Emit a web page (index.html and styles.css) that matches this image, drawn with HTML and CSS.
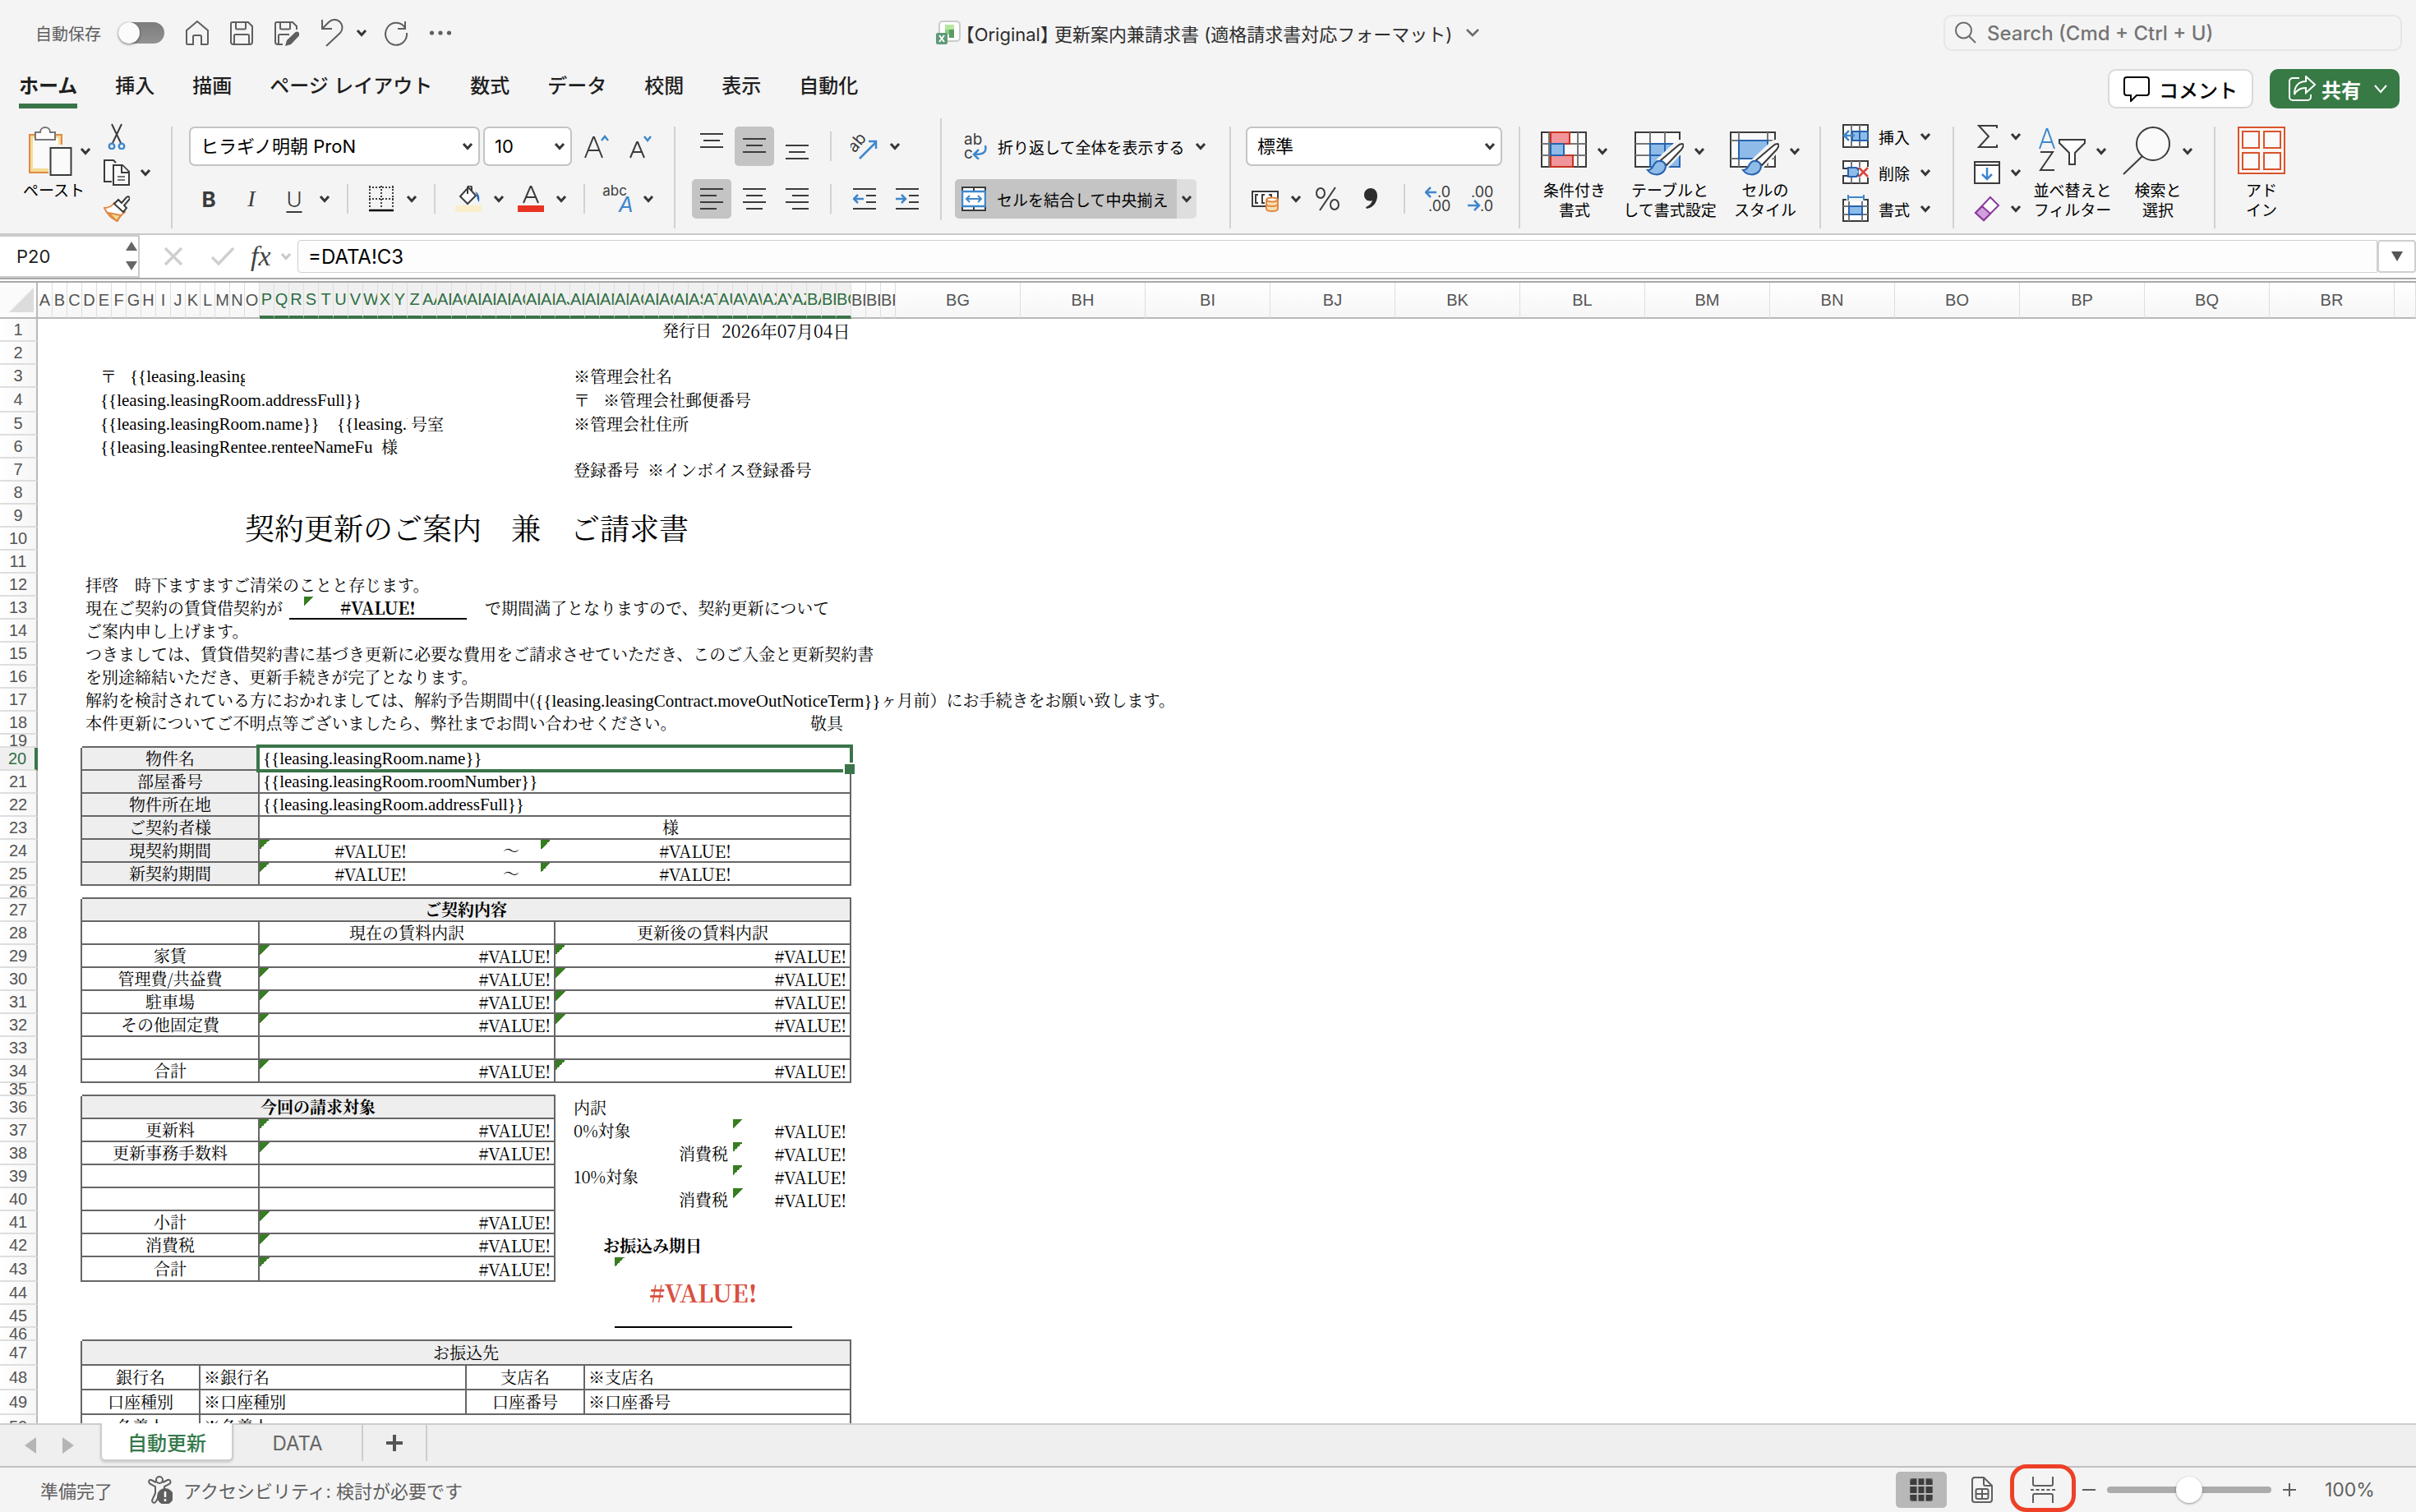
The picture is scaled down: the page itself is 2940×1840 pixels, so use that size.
FILE: index.html
```html
<!DOCTYPE html>
<html lang="ja">
<head>
<meta charset="utf-8">
<title>【Original】 更新案内兼請求書</title>
<link rel="stylesheet" href="styles.css">
</head>
<body>
<svg class="defs" aria-hidden="true">
  <symbol id="chev" viewBox="0 0 14 10"><path d="M2 2l5 5.500 5-5.500" fill="none" stroke="currentColor" stroke-width="3"/></symbol>
</svg>

<header class="titlebar">
  <div class="quick">
    <label class="autosave" for="autosave">自動保存</label>
    <input class="toggle" id="autosave" type="checkbox">
    <div class="quick-icons">
      <button aria-label="ホーム"><svg width="28" height="32" viewBox="0 0 28 32"><path d="M1 13L14 2l13 11v15.500a1.500 1.500 0 0 1-1.500 1.500H19v-9.500a1.500 1.500 0 0 0-1.500-1.500h-7A1.500 1.500 0 0 0 9 20.500V30H2.500A1.500 1.500 0 0 1 1 28.500z"/></svg></button>
      <button aria-label="保存"><svg width="28" height="32" viewBox="0 0 28 32"><path d="M3 3h19l5 5v19a3 3 0 0 1-3 3H4a3 3 0 0 1-3-3V5a2 2 0 0 1 2-2zM7 3v7a1.500 1.500 0 0 0 1.500 1.500h9A1.500 1.500 0 0 0 19 10V3M5 30V19.500A1.500 1.500 0 0 1 6.500 18h15a1.500 1.500 0 0 1 1.500 1.500V30"/></svg></button>
      <button aria-label="名前を付けて保存"><svg width="30" height="32" viewBox="0 0 30 32"><path d="M10 30H4a3 3 0 0 1-3-3V5a2 2 0 0 1 2-2h19l5 5v4M7 3v7a1.500 1.500 0 0 0 1.500 1.500h9A1.500 1.500 0 0 0 19 10V3M5 30V19.500A1.500 1.500 0 0 1 6.500 18H18"/><path d="M13 32l2-7 10-9.500a3 3 0 0 1 4.500 4.500L20 30z" fill="currentColor" stroke="none"/></svg></button>
      <button aria-label="元に戻す"><svg width="28" height="34" viewBox="0 0 28 34"><path d="M2 1v11h12M2 12L10 4a9.500 9.500 0 0 1 14 13L7 33"/></svg></button>
    </div>
    <button class="undo-more" aria-label="元に戻す履歴"><svg class="chev"><use href="#chev"/></svg></button>
    <button aria-label="やり直し"><svg width="28" height="32" viewBox="0 0 28 32"><path d="M25 2v9h-9M25 10A13 13.500 0 1 0 27 16"/></svg></button>
    <button class="dots" aria-label="その他"><svg width="28" height="8" viewBox="0 0 28 8"><g fill="currentColor" stroke="none"><circle cx="3.500" cy="4" r="2.600"/><circle cx="14" cy="4" r="2.600"/><circle cx="24.500" cy="4" r="2.600"/></g></svg></button>
  </div>
  <div class="doc-title">
    <svg width="30" height="30" viewBox="0 0 30 30"><rect x="4" y="1" width="25" height="24" rx="4" fill="#fff" stroke="#c9ccc9" stroke-width="2"/><path d="M11 5h11v6H11z" fill="#b8e6a0"/><path d="M16 11h6v10h-6z" fill="#5b9c62"/><path d="M11 11h5v6h-5z" fill="#8ccf84"/><rect x="0" y="15" width="14" height="14" rx="2" fill="#5f9a78"/><path d="M4 18l6 8M10 18l-6 8" stroke="#fff" stroke-width="2"/></svg>
    <h1>【Original】 更新案内兼請求書 (適格請求書対応フォーマット)</h1>
    <button aria-label="ファイル情報"><svg class="chev-thin" viewBox="0 0 18 12"><path d="M2 2l7 7 7-7" stroke-width="2.500"/></svg></button>
  </div>
  <div class="search">
    <svg width="26" height="28" viewBox="0 0 26 28"><circle cx="10.500" cy="11" r="9.500"/><path d="M17 18l8 8"/></svg>
    <input type="text" aria-label="検索" placeholder="Search (Cmd + Ctrl + U)">
  </div>
</header>

<div class="tabbar">
  <nav class="tabs">
    <a href="#" class="on">ホーム</a><a href="#">挿入</a><a href="#">描画</a><a href="#">ページ レイアウト</a><a href="#">数式</a><a href="#">データ</a><a href="#">校閲</a><a href="#">表示</a><a href="#">自動化</a>
  </nav>
  <button class="pill"><svg width="32" height="32" viewBox="0 0 32 32"><path d="M4 2h24a3 3 0 0 1 3 3v16a3 3 0 0 1-3 3H16l-7 7v-7H4a3 3 0 0 1-3-3V5a3 3 0 0 1 3-3z"/></svg>コメント</button>
  <button class="pill share"><svg width="34" height="32" viewBox="0 0 34 32"><path d="M14 3H6a4 4 0 0 0-4 4v19a4 4 0 0 0 4 4h18a4 4 0 0 0 4-4v-3M22 1l11 10-11 10v-6c-7 0-11 2-14 8 0-10 5-16 14-16z"/></svg>共有<svg class="chev-thin" viewBox="0 0 18 12"><path d="M2 2l7 8 7-8"/></svg></button>
</div>

<div class="ribbon">
  <section class="grp g-clip">
    <button class="big paste"><span class="big-ic"><svg width="56" height="60" viewBox="0 0 56 60"><path d="M2 10h39v46H2z" fill="#f3db94" stroke="#e08a44" stroke-width="2"/><path d="M6 14h31v37H6z" fill="#fafafa"/><path d="M9 7h6c0-8 12-8 12 0h6v9H9z" fill="#fff" stroke="#767676" stroke-width="2"/><path d="M25 22h30v40H25z" fill="#f4f4f4"/><path d="M27.500 26h25v33h-25z" fill="#fafafa" stroke="#3b3b3b" stroke-width="2"/></svg><svg class="chev"><use href="#chev"/></svg></span><span class="lbl">ペースト</span></button>
    <div class="col3">
      <button class="mini" aria-label="切り取り"><svg width="32" height="32" viewBox="0 0 32 32"><path d="M10 1l11 23M22 1L11 24" fill="none" stroke="#3b3b3b" stroke-width="2"/><g fill="#fff" stroke="#3f87cc" stroke-width="2.500"><circle cx="10" cy="28" r="3.200"/><circle cx="22" cy="28" r="3.200"/></g></svg></button>
      <button class="mini" aria-label="コピー"><svg width="32" height="32" viewBox="0 0 32 32"><g fill="#fafafa" stroke="#3b3b3b" stroke-width="2"><path d="M10 27H1V1h11l3 3"/><path d="M12 7h11l8 8v16H12z"/><path d="M22 7v9h9" /><path d="M17 21h9M17 25h9" stroke="#767676"/></g></svg><svg class="chev"><use href="#chev"/></svg></button>
      <button class="mini" aria-label="書式のコピー"><svg width="32" height="32" viewBox="0 0 32 32"><path d="M1 15c5 0 9-2 12-6l13 11c-4 3-7 6-9 11C10 28 4 22 1 15z" fill="#fff" stroke="#e08a44" stroke-width="2"/><path d="M6 21l15 3-5 7z" fill="#f3db94" stroke="#e08a44" stroke-width="2"/><path d="M13 10l5-5 4 4 6-7c3-2 5 1 3 3l-6 7 3 3-4 5z" fill="#fff" stroke="#3b3b3b" stroke-width="2"/></svg></button>
    </div>
  </section>
  <i class="sep"></i>
  <section class="grp rows g-font">
    <div class="line">
      <span class="sel w-font"><select aria-label="フォント"><option>ヒラギノ明朝 ProN</option></select><svg class="chev"><use href="#chev"/></svg></span>
      <span class="sel w-size"><select aria-label="フォント サイズ"><option>10</option></select><svg class="chev"><use href="#chev"/></svg></span>
      <button class="b" aria-label="フォント サイズの拡大"><svg width="32" height="32" viewBox="0 0 32 32"><path d="M2 30L12 5h1l10 25M6 21h13" stroke="#3b3b3b"/><path d="M22 9l4-5 4 5" stroke="#3f87cc" stroke-width="2.500"/></svg></button>
      <button class="b" aria-label="フォント サイズの縮小"><svg width="32" height="32" viewBox="0 0 32 32"><path d="M5 30l8-19h1l8 19M8 23h11" stroke="#3b3b3b"/><path d="M22 4l4 5 4-5" stroke="#3f87cc" stroke-width="2.500"/></svg></button>
    </div>
    <div class="line">
      <button class="b t-b">B</button><button class="b t-i">I</button><button class="b t-u">U</button><button class="c" aria-label="下線"><svg class="chev"><use href="#chev"/></svg></button>
      <i class="vs"></i>
      <button class="b" aria-label="罫線"><svg width="30" height="32" viewBox="0 0 30 32"><path d="M0 2h30M0 16h30M1 0v28M15 0v28M29 0v28" stroke="#3b3b3b" stroke-dasharray="2 2"/><path d="M0 30h30" stroke="#000" stroke-width="2.500"/></svg></button><button class="c" aria-label="罫線の種類"><svg class="chev"><use href="#chev"/></svg></button>
      <i class="vs"></i>
      <button class="b" aria-label="塗りつぶし"><svg width="32" height="32" viewBox="0 0 32 32"><path d="M6 13L16 2l9 10-10 10z" fill="#fff" stroke="#3b3b3b"/><path d="M15 10V3c0-4 5-4 5 0v4" stroke="#3b3b3b"/><path d="M24 7c5 2 6 7 5 13-2-2-3-6-3-9z" fill="#2c6abf" stroke="none"/><path d="M0 24h32v8H0z" fill="#faeecb" stroke="none"/></svg></button><button class="c" aria-label="塗りつぶしの色"><svg class="chev"><use href="#chev"/></svg></button>
      <button class="b" aria-label="文字色"><svg width="32" height="32" viewBox="0 0 32 32"><path d="M7 21L15.500 1h1L25 21M10 14h12" stroke="#3b3b3b"/><path d="M0 24h32v8H0z" fill="#e83323" stroke="none"/></svg></button><button class="c" aria-label="フォントの色"><svg class="chev"><use href="#chev"/></svg></button>
      <i class="vs"></i>
      <button class="b ruby" aria-label="ふりがな"><span>abc</span><em>A</em></button><button class="c" aria-label="ふりがなの設定"><svg class="chev"><use href="#chev"/></svg></button>
    </div>
  </section>
  <i class="sep"></i>
  <section class="grp rows g-align">
    <div class="line">
      <button class="b" aria-label="上揃え"><svg width="28" height="32" viewBox="0 0 28 32"><path d="M0 1h28M4 9h20M0 17h28" class="k"/></svg></button>
      <button class="b on" aria-label="上下中央揃え"><svg width="28" height="32" viewBox="0 0 28 32"><path d="M0 7h28M4 15h20M0 23h28" class="k"/></svg></button>
      <button class="b" aria-label="下揃え"><svg width="28" height="32" viewBox="0 0 28 32"><path d="M0 15h28M4 23h20M0 31h28" class="k"/></svg></button>
      <i class="vs"></i>
      <button class="b" aria-label="方向"><svg width="34" height="32" viewBox="0 0 34 32"><text x="1" y="20" transform="rotate(-50 8 18)" font-size="20" fill="#3b3b3b" stroke="none">ab</text><path d="M11 31L31 11M22 10h9v9" stroke="#3f87cc" stroke-width="2.500"/></svg></button><button class="c" aria-label="文字の方向"><svg class="chev"><use href="#chev"/></svg></button>
    </div>
    <div class="line">
      <button class="b on" aria-label="左揃え"><svg width="28" height="28" viewBox="0 0 28 28"><path d="M0 2h28M0 10h20M0 18h28M0 26h20" class="k"/></svg></button>
      <button class="b" aria-label="中央揃え"><svg width="28" height="28" viewBox="0 0 28 28"><path d="M0 2h28M4 10h20M0 18h28M4 26h20" class="k"/></svg></button>
      <button class="b" aria-label="右揃え"><svg width="28" height="28" viewBox="0 0 28 28"><path d="M0 2h28M8 10h20M0 18h28M8 26h20" class="k"/></svg></button>
      <i class="vs"></i>
      <button class="b" aria-label="インデントを減らす"><svg width="28" height="28" viewBox="0 0 28 28"><path d="M0 2h28M16 10h12M16 18h12M0 26h28" class="k"/><path d="M13 14H1M6 9l-5 5 5 5" stroke="#3f87cc" stroke-width="2.500"/></svg></button>
      <button class="b" aria-label="インデントを増やす"><svg width="28" height="28" viewBox="0 0 28 28"><path d="M0 2h28M16 10h12M16 18h12M0 26h28" class="k"/><path d="M0 14h12M7 9l5 5-5 5" stroke="#3f87cc" stroke-width="2.500"/></svg></button>
    </div>
  </section>
  <i class="sep up"></i>
  <section class="grp rows g-wrap">
    <div class="line tight">
      <button class="wide wrap"><svg width="28" height="32" viewBox="0 0 28 32"><g font-size="19" fill="#3b3b3b" stroke="none"><text x="0" y="14">ab</text><text x="0" y="31">c</text></g><path d="M26 15c2 8-2 11-13 11M18 20l-6 6 6 6" stroke="#3f87cc" stroke-width="2.500"/></svg>折り返して全体を表示する<svg class="chev"><use href="#chev"/></svg></button>
    </div>
    <div class="line tight">
      <button class="wide merge"><svg width="30" height="32" viewBox="0 0 30 32"><path d="M1 2h28v28H1z" fill="#fff" stroke="#3b3b3b"/><path d="M15 2v5M15 25v5" stroke="#3b3b3b"/><path d="M1 7h28v18H1z" fill="#fff" stroke="#3f87cc" stroke-width="2.500"/><path d="M6 16h18M10 12l-4 4 4 4M20 12l4 4-4 4" stroke="#3f87cc"/></svg>セルを結合して中央揃え</button><button class="merge-more" aria-label="結合の種類"><svg class="chev"><use href="#chev"/></svg></button>
    </div>
  </section>
  <i class="sep"></i>
  <section class="grp rows g-num">
    <div class="line">
      <span class="sel w-num"><select aria-label="表示形式"><option>標準</option></select><svg class="chev"><use href="#chev"/></svg></span>
    </div>
    <div class="line">
      <button class="b" aria-label="通貨"><svg width="34" height="32" viewBox="0 0 34 32"><path d="M1 7h31v18H1z" fill="#fff" stroke="#3b3b3b"/><path d="M8 11H5v10h3M16 11h-3v10h3M21 11h3v4" stroke="#3b3b3b"/><path d="M18 17v11c0 4 14 4 14 0V17" fill="#f7dcae" stroke="#e08a44"/><ellipse cx="25" cy="17" rx="7" ry="2.500" fill="#fff" stroke="#e08a44"/><path d="M18 22c0 4 14 4 14 0" stroke="#e08a44"/></svg></button><button class="c" aria-label="通貨の種類"><svg class="chev"><use href="#chev"/></svg></button>
      <button class="b" aria-label="パーセント"><svg width="32" height="32" viewBox="0 0 32 32"><g stroke="#3b3b3b"><ellipse cx="7" cy="9" rx="5" ry="6"/><ellipse cx="24" cy="23" rx="5" ry="6"/><path d="M25 2L6 30"/></g></svg></button>
      <button class="b" aria-label="桁区切り"><svg width="18" height="28" viewBox="0 0 18 28"><path d="M9 1c5 0 8 4 8 9 0 8-5 15-13 16l-1-2c5-2 7-5 8-8-6 2-10-2-10-7 0-5 4-8 8-8z" fill="#2e2e2e" stroke="none"/></svg></button>
      <i class="vs"></i>
      <button class="b" aria-label="小数点以下の表示桁数を増やす"><svg width="32" height="34" viewBox="0 0 32 34"><g font-size="18" fill="#3b3b3b" stroke="none"><text x="15" y="15">.0</text><text x="4" y="32">.00</text></g><path d="M14 9H1M7 3L1 9l6 6" stroke="#3f87cc" stroke-width="2.500"/></svg></button>
      <button class="b" aria-label="小数点以下の表示桁数を減らす"><svg width="32" height="34" viewBox="0 0 32 34"><g font-size="18" fill="#3b3b3b" stroke="none"><text x="4" y="15">.00</text><text x="15" y="32">.0</text></g><path d="M0 25h13M8 19l6 6-6 6" stroke="#3f87cc" stroke-width="2.500"/></svg></button>
    </div>
  </section>
  <i class="sep"></i>
  <section class="grp g-style">
    <button class="big"><span class="big-ic"><svg width="56" height="60" viewBox="0 0 56 60"><path d="M1 7h54v42H1z" fill="#fafafa" stroke="#3b3b3b" stroke-width="2"/><path d="M10 7v42M45 7v42M1 21h54M1 35h54" stroke="#767676" stroke-width="2"/><path d="M12 7h23v14H12zM12 35h27v14H12z" fill="#f0959a" stroke="#c8321f" stroke-width="2"/><path d="M12 21h16v14H12z" fill="#8fbbe8" stroke="#2763b0" stroke-width="2"/></svg><svg class="chev"><use href="#chev"/></svg></span><span class="lbl">条件付き<br>書式</span></button>
    <button class="big w-tbl"><span class="big-ic"><svg width="60" height="60" viewBox="0 0 60 60"><path d="M1 7h54v42H1z" fill="#fafafa" stroke="#3b3b3b" stroke-width="2"/><path d="M19 7v42M37 7v42M1 21h54M1 35h54" stroke="#767676" stroke-width="2"/><path d="M19 21h36v28H19z" fill="#8fbbe8" stroke="#2763b0" stroke-width="2"/><path d="M37 21v28M19 35h36" stroke="#2763b0" stroke-width="2"/><path d="M57 20c4 1 2 5 0 8L40 46l-8-6 19-18c2-2 4-3 6-2z" fill="#fff" stroke="#f4f4f4" stroke-width="7"/><path d="M58 21c3 1 1 4-1 7L39 47l-7-6 20-17c2-2 4-3 6-3z" fill="#fff" stroke="#3b3b3b" stroke-width="2"/><path d="M16 53c8 0 6-10 13-11 8-1 11 6 7 12-5 6-15 6-20-1z" fill="#8fbbe8" stroke="#2763b0" stroke-width="2"/></svg><svg class="chev"><use href="#chev"/></svg></span><span class="lbl">テーブルと<br>して書式設定</span></button>
    <button class="big"><span class="big-ic"><svg width="60" height="60" viewBox="0 0 60 60"><path d="M1 7h54v42H1z" fill="#fafafa" stroke="#3b3b3b" stroke-width="2"/><path d="M11 7v42M46 7v42M1 17h54M1 39h54" stroke="#767676" stroke-width="2"/><path d="M11 17h35v22H11z" fill="#8fbbe8" stroke="#2763b0" stroke-width="2"/><path d="M57 20c4 1 2 5 0 8L40 46l-8-6 19-18c2-2 4-3 6-2z" fill="#fff" stroke="#f4f4f4" stroke-width="7"/><path d="M58 21c3 1 1 4-1 7L39 47l-7-6 20-17c2-2 4-3 6-3z" fill="#fff" stroke="#3b3b3b" stroke-width="2"/><path d="M16 53c8 0 6-10 13-11 8-1 11 6 7 12-5 6-15 6-20-1z" fill="#8fbbe8" stroke="#2763b0" stroke-width="2"/></svg><svg class="chev"><use href="#chev"/></svg></span><span class="lbl">セルの<br>スタイル</span></button>
  </section>
  <i class="sep"></i>
  <section class="grp g-cells">
    <div class="col3">
      <button class="mini"><svg width="32" height="30" viewBox="0 0 32 30"><path d="M1 1h30v27H1z" fill="#fff" stroke="#3b3b3b" stroke-width="2"/><path d="M11 1v27M21 1v27" stroke="#767676" stroke-width="2"/><path d="M12 9h19v11H12z" fill="#8fbbe8" stroke="#2763b0" stroke-width="2"/><path d="M21 9v11" stroke="#2763b0" stroke-width="2"/><path d="M15 14H1M8 8l-6 6 6 6" fill="none" stroke="#3f87cc" stroke-width="2.500"/></svg><span>挿入</span><svg class="chev"><use href="#chev"/></svg></button>
      <button class="mini"><svg width="32" height="30" viewBox="0 0 32 30"><path d="M1 1h30v9H1zM1 19h30v9H1z" fill="#fff" stroke="#3b3b3b" stroke-width="2"/><path d="M11 1v8M21 1v8M11 20v8M21 20v8" stroke="#767676" stroke-width="2"/><path d="M7 9h10l4 5-4 6H7z" fill="#8fbbe8" stroke="#2763b0" stroke-width="2"/><path d="M20 8h12v13H20z" fill="#f4f4f4"/><path d="M20 9l11 11M31 9L20 20" stroke="#d9453b" stroke-width="2.500"/></svg><span>削除</span><svg class="chev"><use href="#chev"/></svg></button>
      <button class="mini"><svg width="32" height="34" viewBox="0 0 32 34"><path d="M1 6h30v26H1z" fill="#fff" stroke="#3b3b3b" stroke-width="2"/><path d="M8 6v26M24 6v26M1 14h30M1 24h30" stroke="#767676" stroke-width="2"/><path d="M5 0h22v8H5z" fill="#f4f4f4"/><path d="M8 14h16v10H8z" fill="#8fbbe8" stroke="#2763b0" stroke-width="2"/><path d="M7 0v7M26 0v7M7 3h19" stroke="#3f87cc" stroke-width="2"/></svg><span>書式</span><svg class="chev"><use href="#chev"/></svg></button>
    </div>
  </section>
  <i class="sep"></i>
  <section class="grp g-edit">
    <div class="col3">
      <button class="mini" aria-label="合計"><svg width="32" height="30" viewBox="0 0 32 30"><path d="M28 5V2H6l12 13L6 28h22v-3" fill="none" stroke="#3b3b3b" stroke-width="2"/></svg><svg class="chev"><use href="#chev"/></svg></button>
      <button class="mini" aria-label="フィル"><svg width="32" height="30" viewBox="0 0 32 30"><path d="M1 2h30v26H1zM1 6h30" fill="#fff" stroke="#3b3b3b" stroke-width="2"/><path d="M16 9v14M10 17l6 6 6-6" fill="none" stroke="#3f87cc" stroke-width="2.500"/></svg><svg class="chev"><use href="#chev"/></svg></button>
      <button class="mini" aria-label="クリア"><svg width="32" height="32" viewBox="0 0 32 32"><path d="M20 2l10 10-18 18L2 21z" fill="#fff" stroke="#8a3b9e" stroke-width="2"/><path d="M10 13l10 9-8 8L2 21z" fill="#d19fdc" stroke="#8a3b9e" stroke-width="2"/></svg><svg class="chev"><use href="#chev"/></svg></button>
    </div>
    <button class="big"><span class="big-ic"><svg width="58" height="60" viewBox="0 0 58 60"><path d="M2 27L10.500 3h1L20 27M5 19h12" fill="none" stroke="#3f87cc" stroke-width="2"/><path d="M3 31h15L3 53h17" fill="none" stroke="#3b3b3b" stroke-width="2"/><path d="M26 16h31v4L45 32v14h-7V32L26 20z" fill="#fff" stroke="#3b3b3b" stroke-width="2"/></svg><svg class="chev"><use href="#chev"/></svg></span><span class="lbl">並べ替えと<br>フィルター</span></button>
    <button class="big w-find"><span class="big-ic"><svg width="60" height="60" viewBox="0 0 60 60"><circle cx="37" cy="21" r="20" fill="#fafafa" stroke="#3b3b3b" stroke-width="2"/><path d="M24 36L1 58" stroke="#3b3b3b" stroke-width="2"/></svg><svg class="chev"><use href="#chev"/></svg></span><span class="lbl">検索と<br>選択</span></button>
  </section>
  <i class="sep"></i>
  <section class="grp g-add">
    <button class="big"><span class="big-ic"><svg width="60" height="60" viewBox="0 0 60 60"><g fill="none" stroke="#d9532c" stroke-width="2"><path d="M2 1h56v56H2z" fill="#fdf5f2"/><path d="M7 6h20v20H7zM33 6h20v20H33zM7 32h20v20H7zM33 32h20v20H33z" fill="#fafafa"/></g></svg></span><span class="lbl">アド<br>イン</span></button>
  </section>
</div>

<div class="formula">
  <div class="namebox"><input type="text" value="P20" aria-label="名前ボックス"><svg width="16" height="36" viewBox="0 0 16 36"><path d="M8 0l7 11H1zM8 35l7-11H1z" fill="#666"/></svg></div>
  <div class="fx">
    <button aria-label="キャンセル"><svg width="24" height="24" viewBox="0 0 24 24"><path d="M2 2l20 20M22 2L2 22" stroke="#cfcfcf" stroke-width="3.500"/></svg></button>
    <button aria-label="入力"><svg width="30" height="24" viewBox="0 0 30 24"><path d="M2 13l8 8L28 2" fill="none" stroke="#cfcfcf" stroke-width="3.500"/></svg></button>
    <button class="fx-t">fx</button>
    <button aria-label="関数"><svg class="chev pale"><use href="#chev"/></svg></button>
  </div>
  <input class="fbar" type="text" value="=DATA!C3" aria-label="数式バー">
  <button class="expand" aria-label="数式バーの展開"><svg width="14" height="12" viewBox="0 0 14 12"><path d="M0 0h14L7 12z" fill="#555"/></svg></button>
</div>

<main class="sheet">
<table>
<colgroup><col class="c-r"><col class="c-n" span="58"><col class="c-w" span="12"><col></colgroup>
<thead>
<tr><th class="corner"><svg width="30" height="30" viewBox="0 0 30 30"><path d="M30 0v30H0z" fill="#dcdcdc"/></svg></th><th>A</th><th>B</th><th>C</th><th>D</th><th>E</th><th>F</th><th>G</th><th>H</th><th>I</th><th>J</th><th>K</th><th>L</th><th>M</th><th>N</th><th>O</th><th class="s">P</th><th class="s">Q</th><th class="s">R</th><th class="s">S</th><th class="s">T</th><th class="s">U</th><th class="s">V</th><th class="s">W</th><th class="s">X</th><th class="s">Y</th><th class="s">Z</th><th class="s">AA</th><th class="s">AB</th><th class="s">AC</th><th class="s">AD</th><th class="s">AE</th><th class="s">AF</th><th class="s">AG</th><th class="s">AH</th><th class="s">AI</th><th class="s">AJ</th><th class="s">AK</th><th class="s">AL</th><th class="s">AM</th><th class="s">AN</th><th class="s">AO</th><th class="s">AP</th><th class="s">AQ</th><th class="s">AR</th><th class="s">AS</th><th class="s">AT</th><th class="s">AU</th><th class="s">AV</th><th class="s">AW</th><th class="s">AX</th><th class="s">AY</th><th class="s">AZ</th><th class="s">BA</th><th class="s">BB</th><th class="s">BC</th><th>BD</th><th>BE</th><th>BF</th><th>BG</th><th>BH</th><th>BI</th><th>BJ</th><th>BK</th><th>BL</th><th>BM</th><th>BN</th><th>BO</th><th>BP</th><th>BQ</th><th>BR</th><th></th></tr>
</thead>
<tbody>
<tr><th>1</th><td colspan="42"></td><td colspan="4">発行日</td><td colspan="9" class="r date">2026年07月04日</td></tr>
<tr><th>2</th></tr>
<tr><th>3</th><td colspan="4"></td><td colspan="2">〒</td><td colspan="8" class="la clip">{{leasing.leasing</td><td colspan="22"></td><td colspan="19">※管理会社名</td></tr>
<tr class="h30"><th>4</th><td colspan="4"></td><td colspan="32" class="la">{{leasing.leasingRoom.addressFull}}</td><td colspan="2">〒</td><td colspan="17">※管理会社郵便番号</td></tr>
<tr><th>5</th><td colspan="4"></td><td colspan="16" class="la">{{leasing.leasingRoom.name}}</td><td colspan="5" class="la clip">{{leasing.l</td><td colspan="11">号室</td><td colspan="19">※管理会社住所</td></tr>
<tr><th>6</th><td colspan="4"></td><td colspan="19" class="la clip">{{leasing.leasingRentee.renteeNameFu</td><td colspan="13">様</td></tr>
<tr><th>7</th><td colspan="36"></td><td colspan="5">登録番号</td><td colspan="14">※インボイス登録番号</td></tr>
<tr><th>8</th></tr>
<tr><th>9</th><td colspan="3"></td><td colspan="52" rowspan="2" class="m title">契約更新のご案内　兼　ご請求書</td></tr>
<tr><th>10</th></tr>
<tr><th>11</th></tr>
<tr><th>12</th><td colspan="3"></td><td colspan="52">拝啓　時下ますますご清栄のことと存じます。</td></tr>
<tr><th>13</th><td colspan="3"></td><td colspan="14">現在ご契約の賃貸借契約が</td><td class="ul"></td><td colspan="10" class="ul m bold err">#VALUE!</td><td class="ul"></td><td></td><td colspan="25">で期間満了となりますので、契約更新について</td></tr>
<tr><th>14</th><td colspan="3"></td><td colspan="52">ご案内申し上げます。</td></tr>
<tr><th>15</th><td colspan="3"></td><td colspan="52">つきましては、賃貸借契約書に基づき更新に必要な費用をご請求させていただき、このご入金と更新契約書</td></tr>
<tr><th>16</th><td colspan="3"></td><td colspan="52">を別途締結いただき、更新手続きが完了となります。</td></tr>
<tr><th>17</th><td colspan="3"></td><td colspan="52">解約を検討されている方におかれましては、解約予告期間中(<span class="la">{{leasing.leasingContract.moveOutNoticeTerm}}</span>ヶ月前）にお手続きをお願い致します。</td></tr>
<tr><th>18</th><td colspan="3"></td><td colspan="49">本件更新についてご不明点等ございましたら、弊社までお問い合わせください。</td><td colspan="3">敬具</td></tr>
<tr class="h16"><th>19</th><td colspan="3"></td><td colspan="52" class="bb"></td></tr>

<tr class="cur"><th>20</th><td colspan="3" class="br"></td><td colspan="12" class="g hd m">物件名</td><td colspan="40" class="g la active">{{leasing.leasingRoom.name}}</td></tr>
<tr><th>21</th><td colspan="3" class="br"></td><td colspan="12" class="g hd m">部屋番号</td><td colspan="40" class="g la">{{leasing.leasingRoom.roomNumber}}</td></tr>
<tr><th>22</th><td colspan="3" class="br"></td><td colspan="12" class="g hd m">物件所在地</td><td colspan="40" class="g la">{{leasing.leasingRoom.addressFull}}</td></tr>
<tr><th>23</th><td colspan="3" class="br"></td><td colspan="12" class="g hd m">ご契約者様</td><td colspan="27" class="bb"></td><td colspan="13" class="g">様</td></tr>
<tr><th>24</th><td colspan="3" class="br"></td><td colspan="12" class="g hd m">現契約期間</td><td colspan="15" class="bb m err">#VALUE!</td><td colspan="4" class="bb m">～</td><td colspan="21" class="g m err">#VALUE!</td></tr>
<tr><th>25</th><td colspan="3" class="br"></td><td colspan="12" class="g hd m">新契約期間</td><td colspan="15" class="bb m err">#VALUE!</td><td colspan="4" class="bb m">～</td><td colspan="21" class="g m err">#VALUE!</td></tr>
<tr class="h16"><th>26</th><td colspan="3"></td><td colspan="52" class="bb"></td></tr>

<tr><th>27</th><td colspan="3" class="br"></td><td colspan="52" class="g hd m bold">ご契約内容</td></tr>
<tr><th>28</th><td colspan="3" class="br"></td><td colspan="12" class="g"></td><td colspan="20" class="g m">現在の賃料内訳</td><td colspan="20" class="g m">更新後の賃料内訳</td></tr>
<tr><th>29</th><td colspan="3" class="br"></td><td colspan="12" class="g m">家賃</td><td colspan="20" class="g r err">#VALUE!</td><td colspan="20" class="g r err">#VALUE!</td></tr>
<tr><th>30</th><td colspan="3" class="br"></td><td colspan="12" class="g m">管理費/共益費</td><td colspan="20" class="g r err">#VALUE!</td><td colspan="20" class="g r err">#VALUE!</td></tr>
<tr><th>31</th><td colspan="3" class="br"></td><td colspan="12" class="g m">駐車場</td><td colspan="20" class="g r err">#VALUE!</td><td colspan="20" class="g r err">#VALUE!</td></tr>
<tr><th>32</th><td colspan="3" class="br"></td><td colspan="12" class="g m">その他固定費</td><td colspan="20" class="g r err">#VALUE!</td><td colspan="20" class="g r err">#VALUE!</td></tr>
<tr><th>33</th><td colspan="3" class="br"></td><td colspan="12" class="g"></td><td colspan="20" class="g"></td><td colspan="20" class="g"></td></tr>
<tr><th>34</th><td colspan="3" class="br"></td><td colspan="12" class="g m">合計</td><td colspan="20" class="g r err">#VALUE!</td><td colspan="20" class="g r err">#VALUE!</td></tr>
<tr class="h16"><th>35</th><td colspan="3"></td><td colspan="32" class="bb"></td></tr>

<tr><th>36</th><td colspan="3" class="br"></td><td colspan="32" class="g hd m bold">今回の請求対象</td><td></td><td colspan="19">内訳</td></tr>
<tr><th>37</th><td colspan="3" class="br"></td><td colspan="12" class="g m">更新料</td><td colspan="20" class="g r err">#VALUE!</td><td></td><td colspan="11">0%対象</td><td colspan="8" class="r err end">#VALUE!</td></tr>
<tr><th>38</th><td colspan="3" class="br"></td><td colspan="12" class="g m">更新事務手数料</td><td colspan="20" class="g r err">#VALUE!</td><td></td><td colspan="11" class="r end">消費税</td><td colspan="8" class="r err end">#VALUE!</td></tr>
<tr><th>39</th><td colspan="3" class="br"></td><td colspan="12" class="g"></td><td colspan="20" class="g"></td><td></td><td colspan="11">10%対象</td><td colspan="8" class="r err end">#VALUE!</td></tr>
<tr><th>40</th><td colspan="3" class="br"></td><td colspan="12" class="g"></td><td colspan="20" class="g"></td><td></td><td colspan="11" class="r end">消費税</td><td colspan="8" class="r err end">#VALUE!</td></tr>
<tr><th>41</th><td colspan="3" class="br"></td><td colspan="12" class="g m">小計</td><td colspan="20" class="g r err">#VALUE!</td></tr>
<tr><th>42</th><td colspan="3" class="br"></td><td colspan="12" class="g m">消費税</td><td colspan="20" class="g r err">#VALUE!</td><td colspan="3"></td><td colspan="17" class="bold">お振込み期日</td></tr>
<tr class="h30"><th>43</th><td colspan="3" class="br"></td><td colspan="12" class="g m">合計</td><td colspan="20" class="g r err">#VALUE!</td><td colspan="4"></td><td colspan="12" rowspan="3" class="ul m err due">#VALUE!</td></tr>
<tr><th>44</th></tr>
<tr><th>45</th></tr>
<tr class="h16"><th>46</th><td colspan="3"></td><td colspan="52" class="bb"></td></tr>

<tr class="h30"><th>47</th><td colspan="3" class="br"></td><td colspan="52" class="g hd m">お振込先</td></tr>
<tr class="h30"><th>48</th><td colspan="3" class="br"></td><td colspan="8" class="g m">銀行名</td><td colspan="18" class="g">※銀行名</td><td colspan="8" class="g m">支店名</td><td colspan="18" class="g">※支店名</td></tr>
<tr class="h30"><th>49</th><td colspan="3" class="br"></td><td colspan="8" class="g m">口座種別</td><td colspan="18" class="g">※口座種別</td><td colspan="8" class="g m">口座番号</td><td colspan="18" class="g">※口座番号</td></tr>
<tr class="h30"><th>50</th><td colspan="3" class="br"></td><td colspan="8" class="g m">名義人</td><td colspan="44" class="g">※名義人</td></tr>
</tbody>
</table>
</main>

<nav class="sheets">
  <button aria-label="前のシート"><svg width="14" height="20" viewBox="0 0 14 20"><path d="M14 0v20L0 10z"/></svg></button>
  <button aria-label="次のシート"><svg width="14" height="20" viewBox="0 0 14 20"><path d="M0 0v20l14-10z"/></svg></button>
  <a href="#" class="tab on">自動更新</a>
  <a href="#" class="tab">DATA</a>
  <button class="add" aria-label="新しいシート"><svg width="20" height="20" viewBox="0 0 20 20"><path d="M10 0v20M0 10h20" stroke="#555" stroke-width="4"/></svg></button>
</nav>

<footer class="status">
  <span class="ready">準備完了</span>
  <svg width="30" height="34" viewBox="0 0 30 34"><g fill="none" stroke="#5f5f5f" stroke-width="2"><circle cx="14" cy="5" r="4"/><path d="M10 8L4 5c-3-1-4 3-1 5l6 3v8L5 30c0 3 3 4 5 1l3-6M18 8l6-3c3-1 5 3 2 5l-6 3v3"/></g><circle cx="21" cy="25" r="9" fill="#5f5f5f"/><path d="M21 19v7M21 28v3" stroke="#fff" stroke-width="2.500"/></svg>
  <span class="a11y">アクセシビリティ: 検討が必要です</span>
  <div class="views">
    <button class="view on" aria-label="標準"><svg width="28" height="28" viewBox="0 0 28 28"><rect width="28" height="28" rx="5" fill="#3d3d3d"/><path d="M9.500 0v28M18.500 0v28M0 9h28M0 19h28" stroke="#b8b8b8" stroke-width="2"/></svg></button>
    <button class="view" aria-label="ページ レイアウト"><svg width="26" height="32" viewBox="0 0 26 32"><path d="M4 1h11l10 10v17a3 3 0 0 1-3 3H4a3 3 0 0 1-3-3V4a3 3 0 0 1 3-3zM15 1v8a2 2 0 0 0 2 2h8"/><rect x="5.500" y="15" width="15" height="12" rx="2"/><path d="M5 21h16M13 15v12"/></svg></button>
    <button class="view marked" aria-label="改ページ プレビュー"><svg width="30" height="32" viewBox="0 0 30 32"><path d="M3 0v9a2 2 0 0 0 2 2h20a2 2 0 0 0 2-2V0M3 32v-9a2 2 0 0 1 2-2h20a2 2 0 0 1 2 2v9"/><path d="M0 16h30" stroke-dasharray="4 2.500"/></svg></button>
  </div>
  <button class="zb" aria-label="縮小"><svg width="16" height="16" viewBox="0 0 16 16"><path d="M0 8h16"/></svg></button>
  <input class="zoom" type="range" min="0" max="200" value="100" aria-label="ズーム">
  <button class="zb" aria-label="拡大"><svg width="16" height="16" viewBox="0 0 16 16"><path d="M0 8h16M8 0v16"/></svg></button>
  <span class="pct">100%</span>
</footer>
</body>
</html>
```
FILE: styles.css
```css
* { box-sizing: border-box; }

body {
  margin: 0;
  height: 100vh;
  display: flex;
  flex-direction: column;
  overflow: hidden;
  background: #f4f4f4;
  color: #1f1f1f;
  font-family: Inter, "Noto Sans CJK JP", sans-serif;
  font-size: 22px;
}

button, input, select { font: inherit; color: inherit; margin: 0; padding: 0; border: 0; background: none; }
button { display: flex; align-items: center; justify-content: center; }
a { color: inherit; text-decoration: none; }
svg { display: block; flex: none; fill: none; stroke-width: 2; }
.defs { display: none; }
.chev { width: 14px; height: 10px; color: #363636; }
.chev.pale { color: #c8c8c8; }
.chev-thin { width: 18px; height: 12px; stroke: currentColor; }

/* title bar */
.titlebar { height: 80px; display: grid; grid-template-columns: 1fr auto 1fr; align-items: center; }
.quick { display: flex; align-items: center; padding-left: 43px; color: #5e5e5e; }
.quick svg { stroke: currentColor; }
.autosave { font-size: 20px; }
.toggle {
  appearance: none;
  width: 56px; height: 26px;
  margin: 0 26px 0 21px;
  border-radius: 13px;
  background: linear-gradient(#7c7c7c, #929292);
  display: flex;
}
.toggle::before { content: ""; width: 26px; height: 26px; border-radius: 50%; background: #fbfbfb; box-shadow: 0 1px 3px #0008; }
.quick-icons { display: flex; align-items: center; gap: 26px; }
.undo-more { margin: 0 21px 0 15px; }
.quick .chev { stroke: none; }
.dots { margin-left: 26px; }
.doc-title { display: flex; align-items: center; color: #2d2d2d; }
.doc-title h1 { margin: 0 16px 0 6px; font-size: 22px; font-weight: 400; font-feature-settings: "halt"; white-space: nowrap; }
.doc-title button { color: #6a6a6a; }
.search {
  justify-self: end;
  display: flex; align-items: center;
  width: 558px; height: 44px;
  margin-right: 17px; padding: 0 12px;
  gap: 13px;
  border: 2px solid #e6e6e6; border-radius: 10px;
}
.search svg { stroke: #6b6b6b; }
.search input { flex: 1; min-width: 0; font-size: 24px; font-weight: 500; }
.search input::placeholder { color: #757575; }

/* ribbon tabs */
.tabbar { display: flex; align-items: center; height: 56px; padding: 0 20px 0 23px; gap: 20px; }
.tabs { flex: 1; display: flex; gap: 46px; font-size: 24px; font-weight: 500; }
.tabs a { height: 48px; line-height: 42px; border-bottom: 6px solid transparent; white-space: nowrap; }
.tabs .on { font-weight: 700; background: linear-gradient(#3a7449, #3a7449) bottom / 100% 6px no-repeat border-box; }
.pill {
  height: 48px; padding: 0 17px; gap: 11px;
  border: 2px solid #d9d9d9; border-radius: 10px;
  background: #fff; color: #000;
  font-size: 24px; font-weight: 500;
}
.pill svg { stroke: currentColor; }
.pill.share { padding: 0 12px 0 20px; gap: 7px; border-color: #387a46; background: #387a46; color: #fff; font-weight: 700; }
.share .chev-thin { margin-left: 8px; }

/* ribbon */
.ribbon { display: flex; height: 150px; border-bottom: 2px solid #c9c9c9; color: #000; font-size: 19px; white-space: nowrap; }
.sep { flex: none; width: 2px; height: 124px; margin-top: 18px; background: #d2d2d2; }
.sep.up { margin-top: 8px; }
.grp { flex: none; display: flex; padding-top: 18px; }
.rows { flex-direction: column; gap: 16px; }
.line { display: flex; align-items: center; height: 48px; gap: 4px; }
.line.tight { gap: 0; }
.b { width: 48px; height: 48px; border-radius: 5px; color: #3b3b3b; }
.b.on { background: #c4c4c4; }
.k { stroke: #3b3b3b; }
.c { width: 18px; height: 48px; margin-right: 2px; }
.vs { width: 2px; height: 36px; margin: 0 12px; background: #d2d2d2; }
.t-b { font-size: 26px; font-weight: 700; }
.t-i { font-family: "Liberation Serif", serif; font-size: 28px; font-style: italic; }
.t-u { font-size: 26px; font-weight: 300; text-decoration: underline; text-underline-offset: 5px; }
.ruby { align-items: flex-end; }
.ruby span { font-size: 17px; line-height: 20px; align-self: flex-start; margin-top: 4px; }
.ruby em { font-size: 26px; line-height: 30px; color: #3f87cc; margin: 0 0 2px -10px; }

.sel { display: grid; align-items: center; }
.sel select, .sel .chev { grid-area: 1 / 1; }
.sel select { appearance: none; width: 100%; height: 48px; padding: 0 12px; background: #fff; border: 2px solid #c4c4c4; border-radius: 7px; font-size: 22px; }
.sel .chev { justify-self: end; margin-right: 8px; pointer-events: none; }
.w-font { width: 354px; }
.w-size { width: 108px; }
.w-num { width: 312px; }
.line > .w-size { margin-right: 2px; }

.big { flex-direction: column; justify-content: flex-start; width: 100px; gap: 7px; }
.big-ic { display: flex; align-items: center; gap: 12px; }
.lbl { line-height: 24px; text-align: center; }
.paste { width: 98px; align-items: flex-start; }
.paste .big-ic { padding-left: 6px; gap: 7px; }
.w-tbl { width: 116px; }
.w-find { width: 84px; }
.col3 { display: grid; grid-auto-rows: 44px; margin-top: -10px; }
.mini { justify-content: flex-start; gap: 12px; }

.g-clip { width: 208px; padding-left: 28px; }
.g-font { width: 610px; padding-left: 20px; }
.g-align { width: 322px; padding-left: 20px; }
.g-wrap { width: 350px; padding-left: 16px; }
.g-num { width: 350px; padding-left: 18px; }
.g-style { width: 364px; padding-left: 16px; gap: 8px; }
.g-cells { width: 160px; padding-left: 26px; }
.g-edit { width: 316px; padding-left: 24px; gap: 12px; }
.g-add { padding-left: 6px; }
.wide { height: 48px; gap: 13px; padding-left: 11px; justify-content: flex-start; }
.merge { width: 270px; gap: 13px; padding-left: 8px; background: #c4c4c4; border-radius: 5px 0 0 5px; }
.merge-more { width: 24px; height: 48px; background: #dedede; border-radius: 0 5px 5px 0; }

/* formula bar */
.formula { display: flex; align-items: center; height: 58px; background: #fff; border-bottom: 6px double #a8a8a8; }
.namebox { display: flex; align-items: center; width: 170px; height: 52px; padding: 0 0 0 20px; border: solid #cbcbcb; border-width: 2px 2px 2px 0; }
.namebox input { flex: 1; min-width: 0; }
.fx { display: flex; align-items: center; width: 192px; padding-left: 29px; gap: 19px; }
.fx > button { height: 40px; }
.fx > button + button { margin-left: 14px; }
.fx > .fx-t { font-family: "Liberation Serif", serif; font-style: italic; font-size: 34px; color: #444; margin-left: 0; }
.fx > .fx-t + button { margin-left: -8px; }
.fbar { flex: 1; min-width: 0; height: 40px; padding: 0 12px; border: 1px solid #cfcfcf; border-radius: 4px 0 0 4px; background: #fdfdfd; color: #000; font-size: 24px; }
.expand { width: 47px; height: 40px; border: 2px solid #cfcfcf; border-radius: 4px; }

/* grid */
.sheet { flex: 1; min-height: 0; overflow: hidden; background: #fff; color: #000; font-family: "Noto Serif CJK JP", "Liberation Serif", "Noto Sans CJK JP", serif; font-size: 20px; }
table { width: 100%; table-layout: fixed; border-collapse: separate; border-spacing: 0; }
.c-r { width: 46px; }
.c-n { width: 18px; }
.c-w { width: 152px; }
tr { height: 28px; }
.h30 { height: 30px; }
.h16 { height: 16px; }
th { padding: 0; overflow: hidden; font-family: "Liberation Sans", sans-serif; font-weight: 400; line-height: 14px; color: #555; }
thead tr { height: 44px; }
thead th { line-height: 24px; background: linear-gradient(#fff, #f6f6f6); border-right: 1px solid #dedede; border-bottom: 2px solid #b9b9b9; }
thead .s { color: #2f6f45; background: #f0f0f0; border-bottom: 4px solid #3a7449; }
thead .corner { border-right: 2px solid #b9b9b9; background: #fbfbfb; }
.corner svg { margin-left: 11px; }
tbody th { background: linear-gradient(90deg, #fff, #f6f6f6); border-right: 2px solid #b9b9b9; border-bottom: 2px solid #dedede; }
.cur th { color: #2f6f45; background: #efefef; border-right: 4px solid #3a7449; }
td { padding: 0 4px; line-height: 24px; white-space: nowrap; }
.h16 td { padding: 0; line-height: 0; }
.m { text-align: center; }
.r { text-align: right; }
.la { font-family: "Liberation Serif", serif; font-size: 21px; }
span.la { line-height: 20px; }
.date { font-size: 21px; }
.clip { overflow: hidden; }
.bold { font-weight: 700; }
.title { font-size: 36px; line-height: 44px; }
.bb { border-bottom: 2px solid #666; }
.br { border-right: 2px solid #666; }
.g { border: solid #666; border-width: 0 2px 2px 0; }
.hd { background: #eee; }
.ul { border-bottom: 2px solid #000; }
.err { font-size: 21px; background: linear-gradient(135deg, #377d22 50%, transparent 50%) 0 0 / 12px 12px no-repeat; }
.end { padding-right: 6px; }
.due { font-size: 30px; font-weight: 700; color: #d9503f; }
.active { position: relative; }
.active::before { content: ""; position: absolute; inset: -4px; border: 4px solid #3a7449; }
.active::after { content: ""; position: absolute; right: -6px; bottom: -6px; width: 12px; height: 12px; background: #3a7449; border: solid #fff; border-width: 2px 0 0 2px; }

/* sheet tabs */
.sheets { display: flex; height: 54px; padding-left: 30px; background: #efefef; border-top: 2px solid #cdcdcd; border-bottom: 2px solid #c0c0c0; font-size: 24px; color: #666; }
.sheets > button { height: 50px; margin-right: 32px; }
.sheets svg { fill: #b5b5b5; }
.tab { height: 44px; line-height: 46px; width: 158px; text-align: center; border-right: 2px solid #cdcdcd; }
.tab.on { width: 162px; margin-top: -2px; height: 46px; line-height: 50px; background: #fff; color: #35794c; font-weight: 500; border-radius: 0 0 6px 6px; border: solid #cdcdcd; border-width: 0 2px 2px 2px; box-shadow: 0 2px 3px #0002; }
.sheets > .add { width: 78px; height: 44px; border-right: 2px solid #cdcdcd; }

/* status bar */
.status { display: flex; align-items: center; height: 54px; padding: 0 50px 0 49px; color: #5f5f5f; }
.status svg { stroke: #5f5f5f; }
.ready { margin-right: 43px; }
.a11y { margin-left: 13px; flex: 1; }
.views { display: flex; gap: 12px; margin-right: 17px; }
.view { position: relative; width: 62px; height: 44px; border-radius: 5px; }
.view.on { background: #b8b8b8; }
.marked::after { content: ""; position: absolute; inset: -9px -9px -5px; border: 5px solid #ee4027; border-radius: 20px; }
.zoom { appearance: none; width: 200px; height: 8px; margin: 0 14px; border-radius: 4px; background: #ababab; }
.zoom::-webkit-slider-thumb { appearance: none; width: 32px; height: 32px; border-radius: 50%; background: #fff; box-shadow: 0 1px 3px #0006; }
.pct { margin-left: 35px; width: 61px; font-size: 23px; }
```
